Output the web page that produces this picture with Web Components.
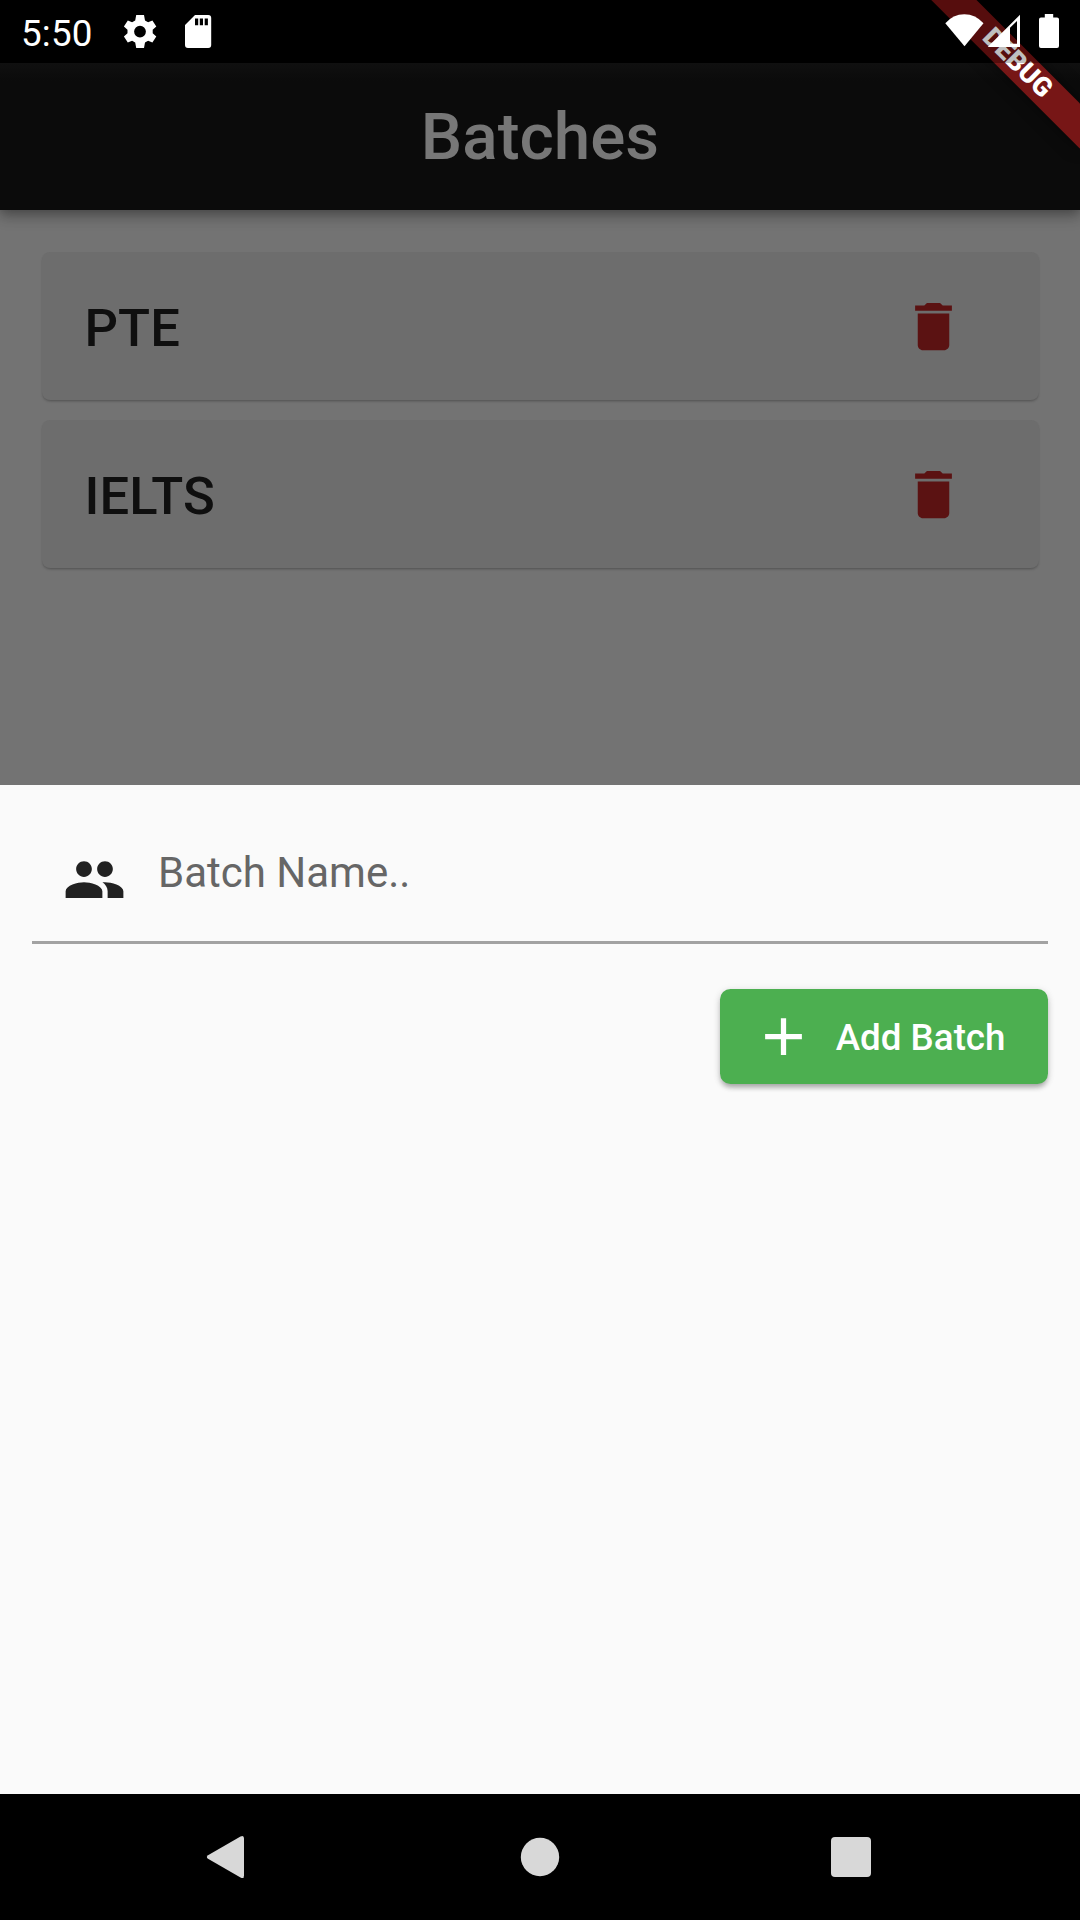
<!DOCTYPE html>
<html lang="en">
<head>
<meta charset="utf-8">
<title>Batches</title>
<style>
html,body{margin:0;padding:0;background:#000}
body{font-family:Roboto,sans-serif;width:1080px;height:1920px;overflow:hidden}
</style>
</head>
<body>
<batch-screen></batch-screen>
<script>
function define(name, html) {
  const t = document.createElement('template');
  t.innerHTML = html;
  customElements.define(name, class extends HTMLElement {
    constructor() {
      super();
      this.attachShadow({mode: 'open'}).appendChild(t.content.cloneNode(true));
    }
  });
}

define('status-bar', `
<style>
:host{position:absolute;inset:0 0 auto 0;height:63px;z-index:3;display:flex;align-items:center;justify-content:space-between;background:rgba(0,0,0,.25);color:#fff;font-size:36.75px;box-sizing:border-box;padding:0 21px}
.g{display:flex;align-items:center}
.t{box-sizing:border-box;height:63px;padding-top:4px;line-height:60px;letter-spacing:.2px}
svg{display:block;fill:#fff}
</style>
<div class="g"><span class="t">5:50</span>
<svg style="margin-left:27.2px" width="40" height="63" viewBox="120 0 40 63"><path fill-rule="evenodd" d="M136.2 15h7.800l1 5.400 3.100 1.900 4.300-1.900 3.900 6-3.600 3.400v3.400l3.600 3.200-3.900 6.200-4.300-1.900-3.100 1.900-1 5.400h-7.800l-1-5.400-3.100-1.900-4.300 1.900-3.900-6.200 3.600-3.200v-3.400l-3.600-3.400 3.900-6 4.300 1.900 3.100-1.900zM140 25.700a5.900 5.900 0 1 0 0 11.800a5.900 5.900 0 1 0 0-11.800z"/></svg>
<svg style="margin-left:25px" width="27" height="63" viewBox="185 0 27 63"><path fill-rule="evenodd" d="M195 15h13.200a3 3 0 0 1 3 3v27a3 3 0 0 1-3 3h-20.200a3 3 0 0 1-3-3v-20zM195 18.500v6.800h3.200v-6.800zM199.800 18.500v6.800h3.200v-6.800zM204.700 18.500v6.800h3.200v-6.800z"/></svg></div>
<svg width="114" height="63" viewBox="945 0 114 63"><path d="M945.300 23.300Q953 14.200 964.300 14.200T983.500 23.300L964.500 46.300z"/><path fill-rule="evenodd" d="M1020 14.800V47h-32.300zM1010 27.700v16.100h7v-22.700z"/><path d="M1044.800 14h8.400v3.400h3.800a2 2 0 0 1 2 2v26.500a2 2 0 0 1-2 2h-16a2 2 0 0 1-2-2v-26.500a2 2 0 0 1 2-2h3.800z"/></svg>`);

define('debug-banner', `
<style>
:host{position:absolute;inset:0 0 auto auto;width:180px;height:180px;overflow:hidden;z-index:2}
div{position:absolute;left:11.9px;top:47.350px;width:210px;height:31.5px;background:rgba(183,28,28,.627);box-shadow:0 0 15px rgba(0,0,0,.5);transform:rotate(45deg);color:#fff;font-weight:900;font-size:26.775px;line-height:31.5px;text-align:center;box-sizing:border-box;padding-left:1px}
</style><div><slot></slot></div>`);

define('app-header', `
<style>
:host{display:flex;align-items:center;justify-content:center;height:147px;background:linear-gradient(#101010,#0b0b0b 18px);color:#777;font-weight:500;font-size:65.625px;box-shadow:0 3px 12px rgba(0,0,0,.34),0 8px 14px rgba(0,0,0,.12);position:relative;line-height:77px}
span{padding-bottom:1px}
</style><span><slot></slot></span>`);

define('batch-card', `
<style>
:host{display:flex;align-items:center;justify-content:space-between;height:148px;box-sizing:border-box;padding:0 74.5px 0 42.5px;background:#6d6d6d;border-radius:8px;box-shadow:0 2px 3px -1px rgba(0,0,0,.26),0 1px 2px rgba(0,0,0,.05);color:#0f0f0f;font-weight:500;font-size:52.5px;letter-spacing:.12px}
svg{display:block;fill:#5b1212}
span{padding-top:3px}
</style>
<span><slot></slot></span>
<svg width="63" height="63" viewBox="0 0 24 24"><path d="M6 19c0 1.100.9 2 2 2h8c1.100 0 2-.9 2-2V7H6v12zM19 4h-3.500l-1-1h-5l-1 1H5v2h14V4z"/></svg>`);

define('batch-input', `
<style>
:host{display:flex;align-items:flex-start;height:159px;box-sizing:border-box;padding:63px 0 0 31.5px;border-bottom:3px solid #a2a2a2;color:#666;font-size:42px;line-height:49px}
svg{display:block;fill:#212121}
span{margin:0 0 0 32px}
</style>
<svg width="63" height="63" viewBox="0 0 24 24"><path d="M16 11c1.660 0 2.990-1.340 2.990-3S17.660 5 16 5s-3 1.340-3 3 1.340 3 3 3zm-8 0c1.660 0 2.990-1.340 2.990-3S9.660 5 8 5 5 6.340 5 8s1.340 3 3 3zm0 2c-2.330 0-7 1.170-7 3.500V19h14v-2.500c0-2.330-4.670-3.500-7-3.500zm8 0c-.29 0-.62.020-.97.050 1.160.84 1.970 1.970 1.970 3.450V19h6v-2.500c0-2.330-4.670-3.500-7-3.500z"/></svg>
<span><slot></slot></span>`);

define('add-button', `
<style>
:host{display:flex;align-items:center;width:328px;height:94.500px;box-sizing:border-box;padding-left:31.5px;background:#4caf50;border-radius:10.5px;color:#fff;font-size:36.75px;font-weight:500;box-shadow:0 5px 5px -2px rgba(0,0,0,.2),0 3px 6px rgba(0,0,0,.16),0 1px 10px rgba(0,0,0,.07)}
svg{display:block;fill:#fff}
span{margin-left:20.800px;padding-top:2px;white-space:nowrap}
</style>
<svg width="63" height="63" viewBox="0 0 24 24"><path d="M19 13h-6v6h-2v-6H5v-2h6V5h2v6h6z"/></svg>
<span><slot></slot></span>`);

define('bottom-sheet', `
<style>
:host{display:flex;flex-direction:column;height:1009.300px;box-sizing:border-box;background:#fafafa;padding:0 31.6px 0 31.5px}
.row{display:flex;justify-content:flex-end;margin-top:45.5px}
</style>
<slot name="field"></slot><div class="row"><slot name="action"></slot></div>`);

define('nav-bar', `
<style>
:host{display:flex;align-items:center;justify-content:space-between;height:126px;box-sizing:border-box;padding:0 209px 0 206px;background:#000}
svg{display:block;fill:#d8d8d8}
</style>
<svg width="40" height="44" viewBox="0 0 40 44"><path d="M34.500 1.600Q38 -.4 38 3.600V40.400Q38 44.400 34.500 42.400L2 23.800Q-.3 22 2 20.200z"/></svg>
<svg style="margin-left:3px" width="40" height="40" viewBox="0 0 40 40"><circle cx="20" cy="20" r="19.200"/></svg>
<svg width="40" height="40" viewBox="0 0 40 40"><rect width="40" height="40" rx="4"/></svg>`);

define('batch-screen', `
<style>
:host{display:flex;flex-direction:column;position:relative;width:1080px;height:1920px;background:#000;overflow:hidden}
.top{height:63px;flex:none}
main{display:flex;flex-direction:column;height:721.700px;flex:none;background:#737373}
.list{display:flex;flex-direction:column;gap:20px;padding:42px 41px 0 42px}
</style>
<status-bar></status-bar>
<debug-banner>DEBUG</debug-banner>
<div class="top"></div>
<main>
<app-header>Batches</app-header>
<div class="list"><batch-card>PTE</batch-card><batch-card>IELTS</batch-card></div>
</main>
<bottom-sheet><batch-input slot="field">Batch Name..</batch-input><add-button slot="action">Add Batch</add-button></bottom-sheet>
<nav-bar></nav-bar>`);
</script>
</body>
</html>
